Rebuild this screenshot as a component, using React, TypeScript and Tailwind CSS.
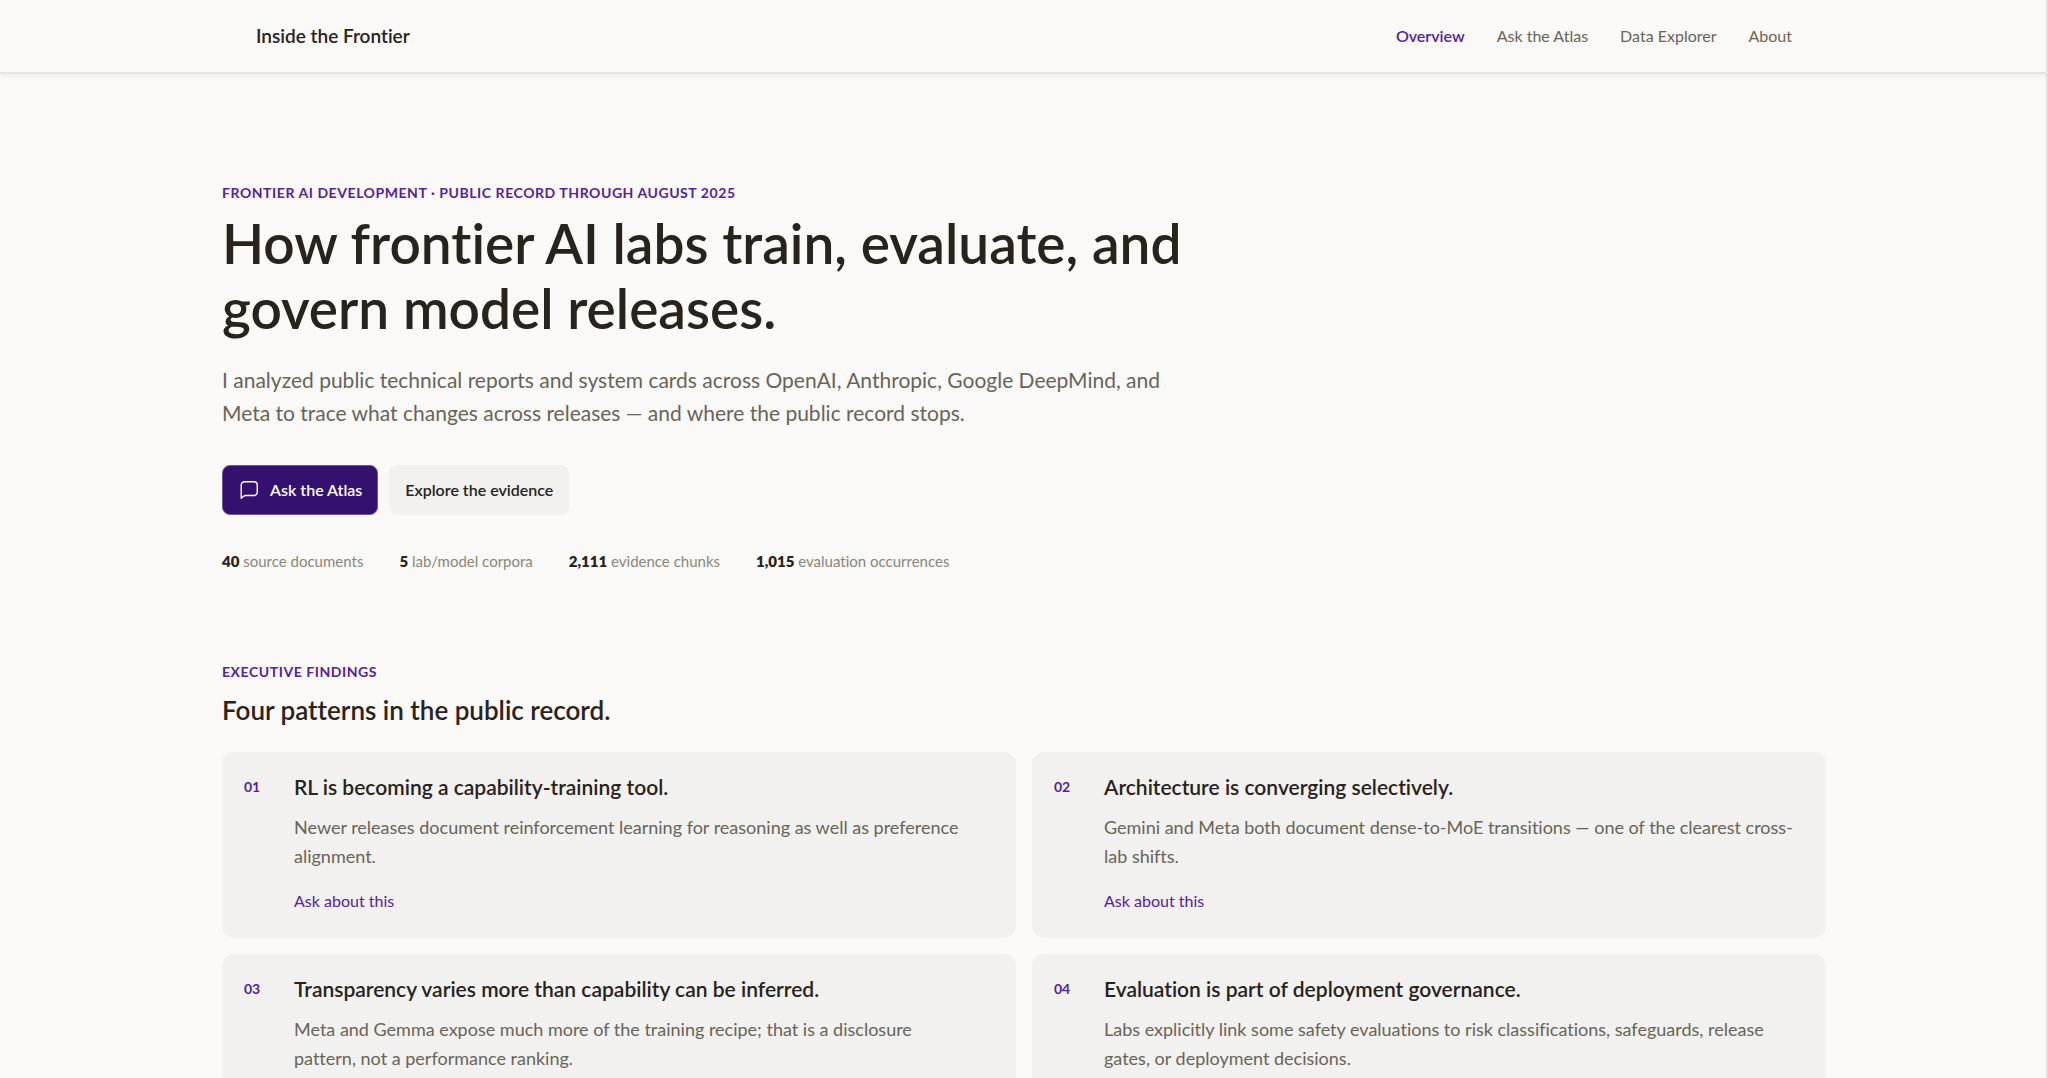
const navItems = ["Overview", "Ask the Atlas", "Data Explorer", "About"];

const stats = [
  { value: "40", label: "source documents" },
  { value: "5", label: "lab/model corpora" },
  { value: "2,111", label: "evidence chunks" },
  { value: "1,015", label: "evaluation occurrences" },
];

const findings = [
  {
    number: "01",
    title: "RL is becoming a capability-training tool.",
    body: "Newer releases document reinforcement learning for reasoning as well as preference alignment.",
  },
  {
    number: "02",
    title: "Architecture is converging selectively.",
    body: "Gemini and Meta both document dense-to-MoE transitions — one of the clearest cross-lab shifts.",
  },
  {
    number: "03",
    title: "Transparency varies more than capability can be inferred.",
    body: "Meta and Gemma expose much more of the training recipe; that is a disclosure pattern,\u00a0not a performance ranking.",
  },
  {
    number: "04",
    title: "Evaluation is part of deployment governance.",
    body: "Labs explicitly link some safety evaluations to risk classifications, safeguards, release gates, or deployment decisions.",
  },
];

function ChatIcon() {
  return (
    <svg
      viewBox="0 0 24 24"
      className="size-[22px]"
      fill="none"
      stroke="currentColor"
      strokeWidth="1.5"
      strokeLinecap="round"
      strokeLinejoin="round"
      aria-hidden="true"
    >
      <path d="M3.5 21V6.5a3.5 3.5 0 0 1 3.5-3.5h10.5a3.5 3.5 0 0 1 3.5 3.5v8a3.5 3.5 0 0 1-3.5 3.5H8.5a4 4 0 0 0-2.6 1z" />
    </svg>
  );
}

function Header() {
  return (
    <header className="border-b-2 border-[#e6e4e1] shadow-[0_2px_4px_rgba(0,0,0,0.05)]">
      <div className="mx-auto flex h-18 max-w-[1604px] items-center justify-between px-[34px]">
        <a href="#" className="text-[19px] leading-6 font-semibold">
          Inside the Frontier
        </a>
        <nav className="flex gap-8 text-base leading-6">
          {navItems.map((item, i) => (
            <a
              key={item}
              href="#"
              aria-current={i === 0 ? "page" : undefined}
              className={i === 0 ? "font-semibold text-[#5223a0]" : "text-[#68645a]"}
            >
              {item}
            </a>
          ))}
        </nav>
      </div>
    </header>
  );
}

function Eyebrow({ children }: { children: string }) {
  return (
    <p className="text-sm leading-5 font-bold tracking-[0.04em] text-[#5223a0] uppercase">{children}</p>
  );
}

export default function App() {
  return (
    <div className="min-h-screen bg-[#faf9f7] pb-16 font-['Lato',sans-serif] text-[#28231c] shadow-[inset_-4px_0_3px_-3px_rgba(0,0,0,0.18)] [font-variant-ligatures:none]">
      <Header />
      <main className="mx-auto max-w-[1604px] pt-[109px]">
        <section className="max-w-[990px]">
          <Eyebrow>Frontier AI development · Public record through August 2025</Eyebrow>
          <h1 className="mt-2 text-[55px] leading-[65px] font-semibold">
            How frontier AI labs train, evaluate, and govern model releases.
          </h1>
          <p className="mt-[22px] text-[21px] leading-[33px] text-[#68645a]">
            I analyzed public technical reports and system cards across OpenAI, Anthropic, Google DeepMind, and
            Meta to trace what changes across releases — and where the public record stops.
          </p>
          <div className="mt-9 flex gap-[11px] text-base font-semibold">
            <button
              type="button"
              className="flex h-[50px] items-center gap-2.5 rounded-lg border border-[#6d55a0] bg-[#34116f] px-[15px] text-white"
            >
              <ChatIcon />
              Ask the Atlas
            </button>
            <button type="button" className="h-[50px] rounded-lg bg-[#f2f1ef] px-4">
              Explore the evidence
            </button>
          </div>
          <ul className="mt-9 flex gap-9 text-[15px] leading-5 text-[#8a867b]">
            {stats.map((stat) => (
              <li key={stat.label}>
                <strong className="font-extrabold text-[#28231c]">{stat.value}</strong> {stat.label}
              </li>
            ))}
          </ul>
        </section>

        <section className="mt-[91px]">
          <Eyebrow>Executive findings</Eyebrow>
          <h2 className="mt-3 text-[26px] leading-8 font-semibold">Four patterns in the public record.</h2>
          <div className="mt-[26px] grid grid-cols-2 gap-4">
            {findings.map((finding) => (
              <article
                key={finding.number}
                className="grid grid-cols-[50px_1fr] rounded-xl bg-[#f2f1ef] px-[22px] pt-[21px] pb-[27px]"
              >
                <span className="text-sm leading-7 font-bold text-[#5223a0]">{finding.number}</span>
                <div>
                  <h3 className="text-[21px] leading-7 font-semibold">{finding.title}</h3>
                  <p className="mt-3 text-lg leading-[29px] text-[#68645a]">{finding.body}</p>
                  <a href="#" className="mt-5 block w-fit text-base leading-5 text-[#5223a0]">
                    Ask about this
                  </a>
                </div>
              </article>
            ))}
          </div>
        </section>
      </main>
    </div>
  );
}
